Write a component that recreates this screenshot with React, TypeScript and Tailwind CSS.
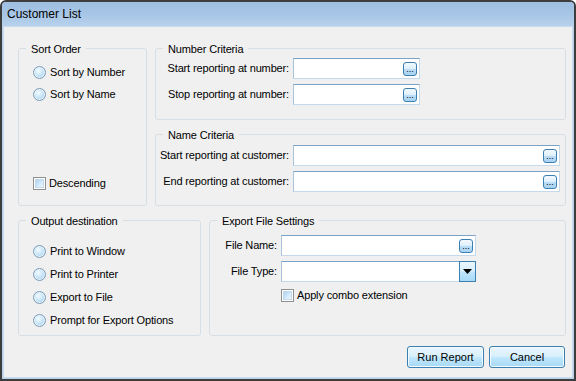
import React from "react";

const font = { fontFamily: '"Liberation Sans", Arial, sans-serif' };
const txt = "text-[11px] tracking-[-0.15px] text-black leading-none whitespace-nowrap";

function Radio({ label }: { label: string }) {
  return (
    <div className="flex items-center h-[13px]">
      <span className="w-[13px] h-[13px] shrink-0 rounded-full border border-[#7e9bb5] bg-[radial-gradient(circle_at_40%_35%,#f4fbff_0%,#c9e6f8_45%,#8fc4e8_100%)] shadow-[inset_0_0_0_1px_#e8f3fb]" />
      <span className={"ml-[4px] " + txt}>{label}</span>
    </div>
  );
}

function Check({ label }: { label: string }) {
  return (
    <div className="flex items-center h-[13px]">
      <span className="w-[13px] h-[13px] shrink-0 border border-[#8e8f8f] bg-white p-[1px] flex">
        <span className="flex-1 bg-[linear-gradient(135deg,#a9d3f3_0%,#d7ecfb_60%,#eef7fe_100%)] border border-[#c4daec]" />
      </span>
      <span className={"ml-[3px] " + txt}>{label}</span>
    </div>
  );
}

function Dots() {
  return (
    <span className="w-[14px] h-[14px] rounded-[3px] border border-[#3c7fb1] bg-[linear-gradient(#f2f9fe_0%,#e0f0fc_45%,#b9dcf6_55%,#a8d3f4_100%)] flex items-end justify-center text-[9px] leading-[9px] text-black pb-[1px]">
      ...
    </span>
  );
}

function TextBox({ width, combo }: { width: number | string; combo?: boolean }) {
  return (
    <div
      className="h-[21px] shrink-0 bg-white border border-[#c5d9ea] border-t-[#7ba3c7] border-l-[#a9c3db] flex items-center justify-end pr-[2px]"
      style={{ width }}
    >
      {combo ? (
        <span className="w-[17px] h-[21px] -mr-[3px] border border-[#3c7fb1] bg-[linear-gradient(#eaf6fd_0%,#d9f0fc_45%,#bee6fd_55%,#a7d9f5_100%)] flex items-center justify-center">
          <svg width="9" height="5" viewBox="0 0 9 5"><path d="M0 0h9L4.5 5z" fill="#000" /></svg>
        </span>
      ) : (
        <Dots />
      )}
    </div>
  );
}

function Group({ title, className, children }: { title: string; className?: string; children?: React.ReactNode }) {
  return (
    <div className={"relative border border-[#d5dfe5] rounded-[3px] " + (className ?? "")}>
      <span className="absolute -top-[6px] left-[7px] px-[5px] bg-[#f0f0f0] text-[11px] tracking-[-0.15px] leading-[13px] text-black whitespace-nowrap">{title}</span>
      {children}
    </div>
  );
}

function Label({ w, children }: { w: number; children: React.ReactNode }) {
  return (
    <span className={"shrink-0 text-right pr-[4px] " + txt} style={{ width: w }}>
      {children}
    </span>
  );
}

function Button({ label, w }: { label: string; w: number }) {
  return (
    <button
      className="h-[22px] rounded-[3px] border border-[#3c7fb1] bg-[linear-gradient(#eaf6fd_0%,#d9f0fc_45%,#bee6fd_55%,#a7d9f5_100%)] text-[11px] text-black shadow-[inset_0_0_0_1px_#f4fbfe]"
      style={{ width: w }}
    >
      {label}
    </button>
  );
}

export default function App() {
  return (
    <div style={font} className="w-[576px] h-[381px] border-2 border-[#3d3d3d] rounded-t-[6px] bg-[#b9d1ea] flex flex-col overflow-hidden">
      <div className="h-[24px] bg-[linear-gradient(#9ebfe2_0%,#a9c7e6_60%,#b8d2ec_100%)] flex items-center pl-[5px] text-[12px] text-black">
        Customer List
      </div>
      <div className="flex-1 mx-[1px] mb-[1px] border border-[#c9dcef] bg-[#f0f0f0] flex flex-col pt-[21px] pl-[14px] pr-[6px]">
        <div className="flex gap-[8px] h-[158px]">
          <Group title="Sort Order" className="w-[129px] h-[158px] flex flex-col pl-[14px] pt-[17px]">
            <Radio label="Sort by Number" />
            <div className="h-[9px]" />
            <Radio label="Sort by Name" />
            <div className="h-[76px]" />
            <Check label="Descending" />
          </Group>
          <div className="flex-1 flex flex-col gap-[14px]">
            <Group title="Number Criteria" className="h-[72px] flex flex-col gap-[5px] pt-[9px]">
              <div className="flex items-center">
                <Label w={137}>Start reporting at number:</Label>
                <TextBox width={127} />
              </div>
              <div className="flex items-center">
                <Label w={137}>Stop reporting at number:</Label>
                <TextBox width={127} />
              </div>
            </Group>
            <Group title="Name Criteria" className="h-[72px] flex flex-col gap-[5px] pt-[10px]">
              <div className="flex items-center">
                <Label w={137}>Start reporting at customer:</Label>
                <TextBox width={267} />
              </div>
              <div className="flex items-center">
                <Label w={137}>End reporting at customer:</Label>
                <TextBox width={267} />
              </div>
            </Group>
          </div>
        </div>
        <div className="flex gap-[8px] mt-[14px] h-[116px]">
          <Group title="Output destination" className="w-[183px] h-[116px] flex flex-col pl-[14px] pt-[24px] gap-[10px]">
            <Radio label="Print to Window" />
            <Radio label="Print to Printer" />
            <Radio label="Export to File" />
            <Radio label="Prompt for Export Options" />
          </Group>
          <Group title="Export File Settings" className="flex-1 h-[116px] flex flex-col pt-[14px] gap-[5px]">
            <div className="flex items-center">
              <Label w={71}>File Name:</Label>
              <TextBox width={195} />
            </div>
            <div className="flex items-center">
              <Label w={71}>File Type:</Label>
              <TextBox width={195} combo />
            </div>
            <div className="pl-[71px] mt-[2px]">
              <Check label="Apply combo extension" />
            </div>
          </Group>
        </div>
        <div className="flex justify-end gap-[5px] mt-[10px] pr-[1px]">
          <Button label="Run Report" w={77} />
          <Button label="Cancel" w={76} />
        </div>
      </div>
    </div>
  );
}
